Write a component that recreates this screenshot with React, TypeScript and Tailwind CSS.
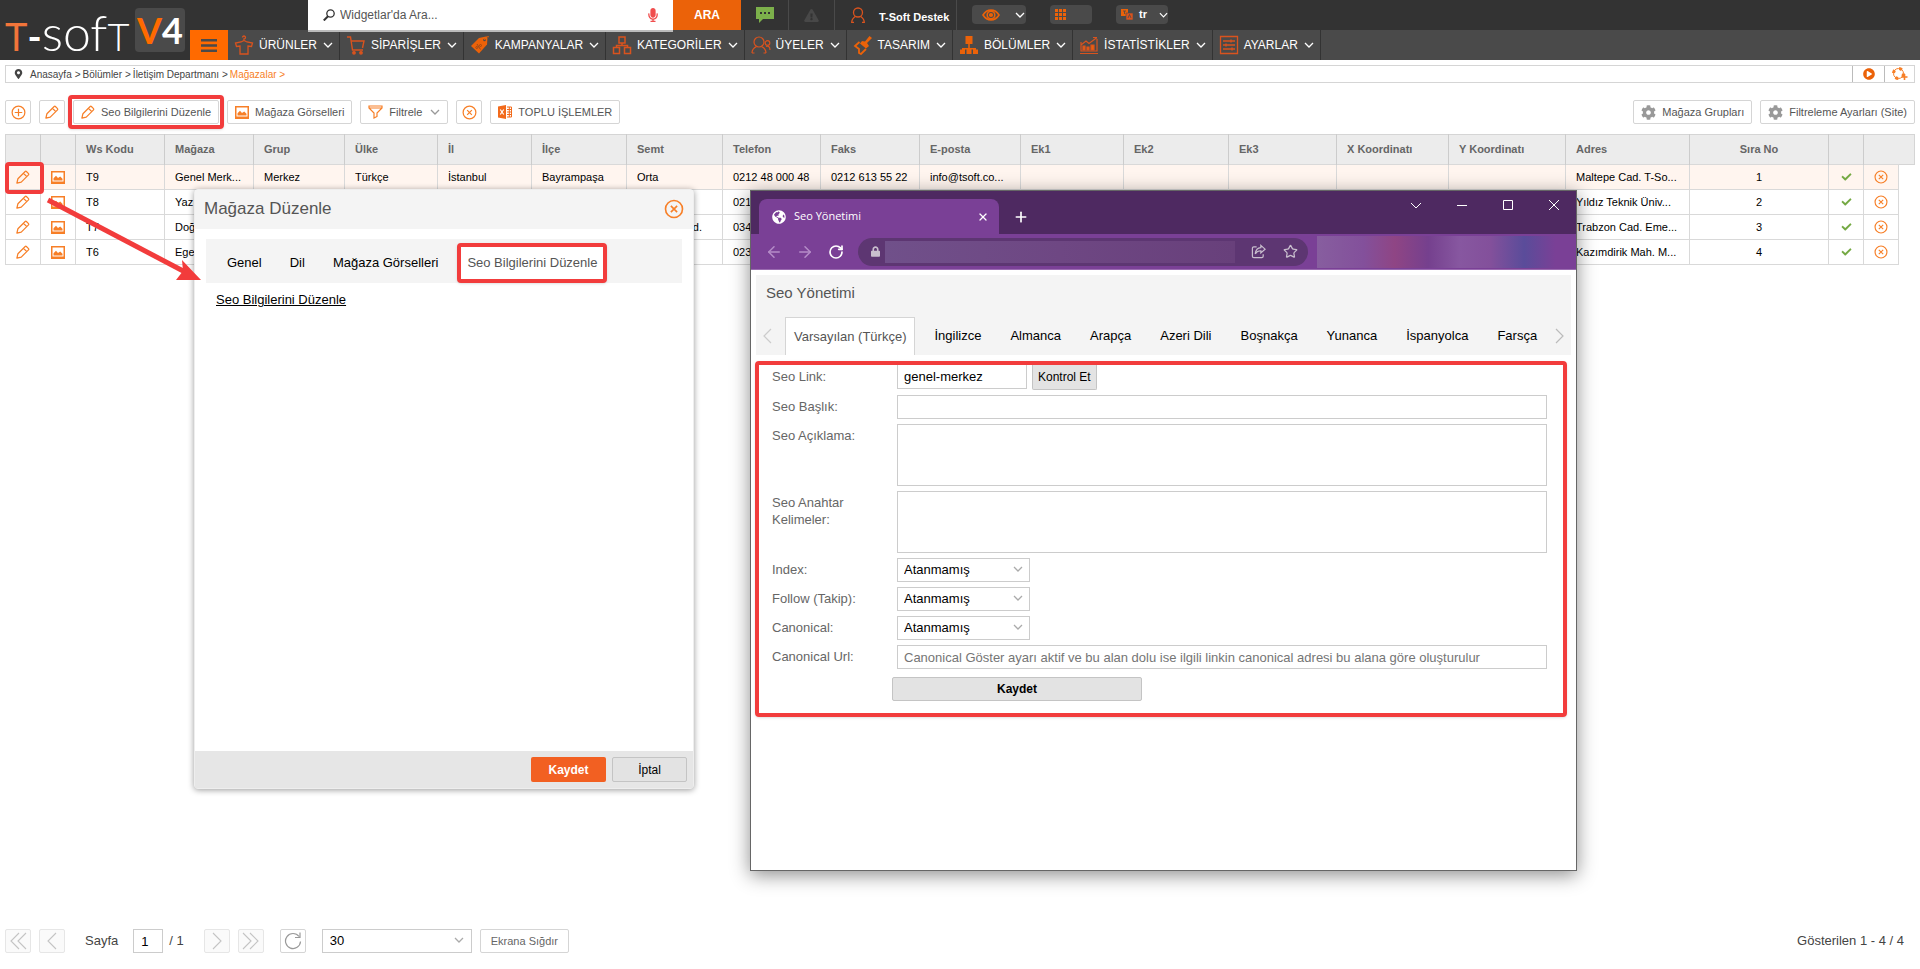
import type { ReactNode } from "react";
import {
  FaMicrophone,
  FaExclamationTriangle,
  FaLock,
  FaGlobeAmericas,
  FaCheck,
  FaPlayCircle,
  FaCog,
  FaMapMarkerAlt,
} from "react-icons/fa";
import { Star, ArrowLeft, ArrowRight, RotateCw, X, Plus } from "lucide-react";

type IconProps = { className?: string };

const Chevron = ({ className = "h-[6px] w-[10px]" }: IconProps) => (
  <svg viewBox="0 0 10 6" className={className} fill="none" stroke="currentColor" strokeWidth="1.3">
    <path d="M1 1l4 4 4-4" />
  </svg>
);

const Pencil = ({ className = "h-[14px] w-[14px]" }: IconProps) => (
  <svg viewBox="0 0 16 16" className={className} fill="none" stroke="#f77f27" strokeWidth="1.4" strokeLinejoin="round">
    <path d="M1 15l1.2-5L10.500 1.700a1 1 0 0 1 1.400 0l2.400 2.400a1 1 0 0 1 0 1.400L6 13.800zM8.500 3.700l3.800 3.800" />
  </svg>
);

const Picture = ({ className = "h-[13px] w-[14px]" }: IconProps) => (
  <svg viewBox="0 0 14 13" className={className}>
    <path fill="#f77f27" d="M0 0h14v13H0z" />
    <path fill="#fff" d="M1.500 1.500h11v9h-11z" />
    <path fill="#f77f27" d="M2.500 9.500V7.200L5 4.800l2 2.200 2.200-1.400 2.300 2.200v1.700z" />
  </svg>
);

const CircleCross = ({ className = "h-[15px] w-[15px]" }: IconProps) => (
  <svg viewBox="0 0 16 16" className={className} fill="none" stroke="#f77f27" strokeWidth="1.3">
    <circle cx="8" cy="8" r="6.8" />
    <path d="M5.500 5.500l5 5m0-5l-5 5" />
  </svg>
);

const CirclePlus = () => (
  <svg viewBox="0 0 16 16" className="h-[15px] w-[15px]" fill="none" stroke="#f77f27" strokeWidth="1.3">
    <circle cx="8" cy="8" r="6.8" />
    <path d="M4 8h8M8 4v8" />
  </svg>
);

const Funnel = () => (
  <svg viewBox="0 0 15 14" className="h-[14px] w-[15px]" fill="none" stroke="#f77f27" strokeWidth="1.2">
    <path d="M1 1h13v2L9 8v3.500L6 13V8L1 3zM1 3h13" />
  </svg>
);

const Excel = () => (
  <svg viewBox="0 0 14 14" className="h-[14px] w-[14px]">
    <path fill="#f26a1b" d="M0 1.500L8 0v14l-8-1.500z" />
    <path d="M9 2h4.500v10H9M9 4.500h4.500M9 7h4.500M9 9.500h4.500M11.300 2v10" fill="none" stroke="#f26a1b" />
    <path d="M2.300 4.500l3.400 5m0-5l-3.400 5" stroke="#fff" strokeWidth="1.200" />
  </svg>
);

const ShareArrow = () => (
  <svg viewBox="0 0 16 16" className="mr-[17px] ml-4 h-[15px] w-[15px]" fill="none" stroke="currentColor" strokeWidth="1.3">
    <path d="M6 3H3a1.500 1.500 0 0 0-1.500 1.500V13A1.500 1.500 0 0 0 3 14.500h8.500A1.500 1.500 0 0 0 13 13v-2" />
    <path d="M10.500 1.500L15 5.500l-4.500 4V7.200C8 7.200 6 8 4.500 10.500 5 6.500 7 4 10.500 3.800z" />
  </svg>
);

const navSvg = "h-[20px] w-[20px] shrink-0";

const ShirtIcon = () => (
  <svg viewBox="0 0 20 20" className={navSvg} fill="none" stroke="#d9531e" strokeWidth="1.3">
    <path d="M10 5.500V4a1.500 1.500 0 1 0-1.500-1.500M10 5.500L7 7 1.500 8l1 3.500L6 11v8h8v-8l3.500.500 1-3.500L13 7z" />
  </svg>
);
const CartIcon = () => (
  <svg viewBox="0 0 20 20" className={navSvg} fill="none" stroke="#d9531e" strokeWidth="1.4">
    <path d="M1 2h3.500l2 13H17M5 6h13l-1.500 7" />
    <circle cx="8" cy="17.800" r="1.200" fill="#d9531e" />
    <circle cx="15" cy="17.800" r="1.200" fill="#d9531e" />
  </svg>
);
const TagIcon = () => (
  <svg viewBox="0 0 20 20" className={navSvg}>
    <path fill="#eb6209" d="M1 11l8-8 7-1.500 1.500 1L17 9.500 9 18.500z" />
    <circle cx="14.500" cy="5" r="1.300" fill="#4a4a4a" />
    <path d="M14.500 5c1-3 3-4 4.500-3" fill="none" stroke="#eb6209" />
    <path d="M7 9l3.500 5.500" stroke="#9c4a1a" />
    <circle cx="6.800" cy="12.500" r="1" fill="none" stroke="#9c4a1a" />
    <circle cx="10.500" cy="10.500" r="1" fill="none" stroke="#9c4a1a" />
  </svg>
);
const TreeIcon = () => (
  <svg viewBox="0 0 20 20" className={navSvg} fill="none" stroke="#d9531e" strokeWidth="1.5">
    <path d="M7 2h6v6H7zM1.500 12.500h6v6h-6zM12.500 12.500h6v6h-6zM10 8v2.500M4.500 12.500v-2h11v2" />
  </svg>
);
const UsersIcon = () => (
  <svg viewBox="0 0 20 20" className={navSvg} fill="none" stroke="#d9531e" strokeWidth="1.2">
    <circle cx="8" cy="7" r="5" />
    <path d="M1 18c0-3 1.500-5 4.500-6.500M15 18c0-3-1.500-5-4.500-6.500M1 18h2.500M12.500 18H15" />
    <circle cx="16.500" cy="8" r="2.300" />
    <path d="M15 11.500c2.500-1 4 .5 4 3.500" />
  </svg>
);
const BrushIcon = () => (
  <svg viewBox="0 0 20 20" className={navSvg}>
    <path fill="#eb6209" d="M9 6l3 .5L16.500 1 19 3l-5 5 2 3-3 2.500-6-5z" />
    <path d="M6.500 7L2 11l4 3v4l2 1 5-5" fill="none" stroke="#eb6209" strokeWidth="1.800" />
  </svg>
);
const SectionsIcon = () => (
  <svg viewBox="0 0 20 20" className={navSvg}>
    <path
      fill="#eb6209"
      d="M6.500 1h7v8h-7zM9.200 9h1.600v6H9.200zM1 14.500h5V19H1zM7.500 14.500h5V19h-5zM14 14.500h5V19h-5zM3 13h14v1.500H3z"
    />
  </svg>
);
const ChartIcon = () => (
  <svg viewBox="0 0 20 20" className={navSvg} fill="none" stroke="#d9531e" strokeWidth="1.200">
    <path d="M2 7v9h16V4M1 18.500h18M2 10l5-4 3 2.500 8-6M14 2.500h4" />
    <path fill="#eb6209" d="M4 11h2v4H4zM8 12h2v3H8zM12 10h3v5h-3z" />
  </svg>
);
const SettingsIcon = () => (
  <svg viewBox="0 0 20 20" className={navSvg} fill="none" stroke="#d9531e" strokeWidth="1.300">
    <path d="M1.500 1.500h17v17h-17zM4 6h12M4 10h12M4 14h12M12 4.500v3M7 8.500v3M13 12.500v3" />
  </svg>
);

const menu = [
  { text: "ÜRÜNLER", icon: <ShirtIcon /> },
  { text: "SİPARİŞLER", icon: <CartIcon /> },
  { text: "KAMPANYALAR", icon: <TagIcon /> },
  { text: "KATEGORİLER", icon: <TreeIcon /> },
  { text: "ÜYELER", icon: <UsersIcon /> },
  { text: "TASARIM", icon: <BrushIcon /> },
  { text: "BÖLÜMLER", icon: <SectionsIcon /> },
  { text: "İSTATİSTİKLER", icon: <ChartIcon /> },
  { text: "AYARLAR", icon: <SettingsIcon /> },
];

const Logo = () => (
  <a href="#" aria-label="T-Soft V4" className="flex w-[190px] shrink-0 items-center justify-between pr-[5px] pl-[5px]">
    <span className="flex h-[60px] items-baseline font-[Lato] leading-[64px] text-white">
      <span className="text-[38px] text-[#f2753a]">T</span>
      <span className="text-[38px] font-bold">-</span>
      <span className="text-[50px] font-light">sof</span>
      <span className="text-[38px] font-light">T</span>
    </span>
    <span className="flex h-[44px] w-[50px] items-center justify-center rounded bg-[#4a4a4a] font-[Lato] text-[36px] leading-[44px] font-bold">
      <span className="text-[#ff6a00]">V</span>
      <span className="text-white">4</span>
    </span>
  </a>
);

const Header = () => (
  <header className="flex h-[60px] bg-[#333]">
    <Logo />
    <div className="flex flex-1 flex-col">
      <div className="flex h-[30px] items-start">
        <div className="relative z-10 ml-[118px] flex h-8 w-[365px] items-center border-b-2 border-[#bbb] bg-white pr-[14px] pl-[15px]">
          <svg viewBox="0 0 12 12" className="h-3 w-3 shrink-0" fill="none" stroke="#333" strokeWidth="1.3">
            <circle cx="7.500" cy="4.500" r="3.700" />
            <path d="M5 7.300L.8 11.500" strokeWidth="2" />
          </svg>
          <input
            aria-label="Widgetlar'da Ara"
            placeholder="Widgetlar'da Ara..."
            className="ml-[5px] min-w-0 flex-1 bg-transparent text-[12px] outline-none placeholder:text-[#555]"
          />
          <button aria-label="Sesli arama">
            <FaMicrophone className="h-[14px] w-[12px] text-[#f04e4e]" />
          </button>
        </div>
        <button className="h-[30px] w-[68px] bg-[#eb6209] text-[12px] font-bold text-white">ARA</button>
        <button aria-label="Mesajlar" className="flex h-[30px] w-[48px] items-center justify-center border-r border-[#4a4a4a]">
          <svg viewBox="0 0 18 16" className="h-4 w-[18px]">
            <path fill="#7cb04b" d="M0 0h18v12H7l-4 4v-4H0z" />
            <path fill="#333" d="M4 5h2v2H4zM8 5h2v2H8zM12 5h2v2h-2z" />
          </svg>
        </button>
        <button aria-label="Uyarılar" className="flex h-[30px] w-[46px] items-center justify-center border-r border-[#4a4a4a]">
          <FaExclamationTriangle className="h-[13px] w-[15px] text-[#484848]" />
        </button>
        <button className="flex h-[30px] w-[122px] items-center border-r border-[#4a4a4a] pl-4 text-[11px] text-white">
          <svg viewBox="0 0 14 16" className="mr-[14px] h-4 w-[14px]" fill="none" stroke="#d9531e" strokeWidth="1.300">
            <circle cx="7" cy="5.500" r="4.500" />
            <path d="M3 15.500H.700c0-3 1.300-4.500 3.500-6M11 15.500h2.300c0-3-1.300-4.500-3.500-6" />
          </svg>
          <span className="mt-1 font-bold">T-Soft Destek</span>
        </button>
        <button aria-label="Görünüm" className="mt-[5px] ml-[15px] flex h-[19px] w-[54px] items-center justify-between rounded bg-[#4a4a4a] pr-px pl-[10px] text-white">
          <svg viewBox="0 0 18 12" className="h-3 w-[18px]" fill="none" stroke="#eb6209" strokeWidth="1.600">
            <path d="M1 6c4-6.500 12-6.500 16 0-4 6.500-12 6.500-16 0z" />
            <circle cx="9" cy="6" r="3.800" />
            <circle cx="9" cy="6" r="1.300" fill="#eb6209" />
          </svg>
          <Chevron />
        </button>
        <button aria-label="Uygulamalar" className="mt-[5px] ml-[24px] flex h-[19px] w-[42px] items-center rounded bg-[#4a4a4a] pl-[5px]">
          <svg viewBox="0 0 11 11" className="h-[11px] w-[11px]" fill="#eb6209">
            <path d="M0 0h3v3H0zM4 0h3v3H4zM8 0h3v3H8zM0 4h3v3H0zM4 4h3v3H4zM8 4h3v3H8zM0 8h3v3H0zM4 8h3v3H4zM8 8h3v3H8z" />
          </svg>
        </button>
        <button className="mt-[5px] ml-[24px] flex h-[19px] w-[52px] items-center rounded bg-[#4a4a4a] pl-[5px] text-[11px] font-bold text-white">
          <svg viewBox="0 0 12 11" className="mr-[6px] h-[11px] w-3">
            <path fill="#eb6209" d="M0 0h7v7H0z" />
            <path fill="#d9531e" stroke="#4a4a4a" strokeWidth=".6" d="M5 4h7v7H5z" />
            <path d="M2 2h3M3.500 2v3M7 9l1.500-3.500L10 9" fill="none" stroke="#4a4a4a" strokeWidth=".8" />
          </svg>
          tr
          <Chevron className="ml-auto h-[6px] w-[9px]" />
        </button>
      </div>
      <nav className="flex h-[30px] bg-[#4a4a4a]">
        <button aria-label="Menü" className="flex w-[38px] items-center justify-center bg-[#ff6a00]">
          <svg viewBox="0 0 16 13" className="h-[13px] w-4" fill="#4a4a4a">
            <path d="M0 0h16v2.500H0zM0 5.200h16v2.500H0zM0 10.400h16v2.500H0z" />
          </svg>
        </button>
        {menu.map(({ text, icon }) => (
          <a
            key={text}
            href="#"
            className="flex items-center border-r border-[#333] pr-[6px] pl-[6px] text-[12px] font-medium text-white"
          >
            {icon}
            <span className="mr-[6px] ml-[5px]">{text}</span>
            <Chevron />
          </a>
        ))}
      </nav>
    </div>
  </header>
);

const Separator = () => <span className="mr-[2px] ml-[3px]">&gt;</span>;

const Breadcrumb = () => (
  <div className="mx-[5px] mt-[5px] flex h-[18px] border border-[#d5d5d5] text-[10px] text-[#444]">
    <div className="flex flex-1 items-center pl-2">
      <FaMapMarkerAlt className="mr-[7px] h-[10px] w-[9px] text-[#444]" />
      <a href="#">Anasayfa</a>
      <Separator />
      <a href="#">Bölümler</a>
      <Separator />
      <a href="#">İletişim Departmanı</a>
      <Separator />
      <a href="#" className="text-[#f77f27]">
        Mağazalar &gt;
      </a>
    </div>
    <button aria-label="Video" className="flex w-8 items-center justify-center border-l border-[#bbb]">
      <FaPlayCircle className="h-3 w-3 text-[#eb6209]" />
    </button>
    <button aria-label="Yardım" className="flex w-[30px] items-center justify-center border-l border-[#bbb]">
      <svg viewBox="0 0 16 14" className="h-[14px] w-4" fill="none" stroke="#f77f27">
        <circle cx="6.500" cy="6.500" r="5" />
        <circle cx="6.500" cy="6.500" r="5" strokeWidth="3" strokeDasharray="3 4.850" />
        <path d="M12.500 7v6M9.500 10h6" strokeWidth="1.600" />
      </svg>
    </button>
  </div>
);

type ToolButtonProps = { icon: ReactNode; text?: string; label?: string; marked?: boolean; children?: ReactNode };

const ToolButton = ({ icon, text, label, marked, children }: ToolButtonProps) => (
  <button
    aria-label={label}
    className={`relative flex h-6 items-center rounded-[2px] border border-[#d5d5d5] bg-white text-[11px] text-[#555] ${
      text ? "px-[7px]" : "w-[26px] justify-center"
    }`}
  >
    {icon}
    {text && <span className="ml-[6px]">{text}</span>}
    {children}
    {marked && <span className="absolute -inset-x-[6px] -inset-y-[6px] rounded border-4 border-[#f23c3c] shadow-sm" />}
  </button>
);

const Toolbar = () => (
  <div className="mx-[5px] mt-[17px] flex items-center gap-2">
    <ToolButton icon={<CirclePlus />} label="Ekle" />
    <ToolButton icon={<Pencil />} label="Düzenle" />
    <ToolButton icon={<Pencil />} text="Seo Bilgilerini Düzenle" marked />
    <ToolButton icon={<Picture />} text="Mağaza Görselleri" />
    <ToolButton icon={<Funnel />} text="Filtrele">
      <Chevron className="ml-2 h-[6px] w-[10px] text-[#999]" />
    </ToolButton>
    <ToolButton icon={<CircleCross />} label="Filtreyi temizle" />
    <ToolButton icon={<Excel />} text="TOPLU İŞLEMLER" />
    <div className="ml-auto flex gap-2">
      <ToolButton icon={<FaCog className="h-[15px] w-[15px] text-[#999]" />} text="Mağaza Grupları" />
      <ToolButton icon={<FaCog className="h-[15px] w-[15px] text-[#999]" />} text="Filtreleme Ayarları (Site)" />
    </div>
  </div>
);

const columns = [
  { title: "", width: "w-[35px]" },
  { title: "", width: "w-[35px]" },
  { title: "Ws Kodu", width: "w-[89px]" },
  { title: "Mağaza", width: "w-[89px]" },
  { title: "Grup", width: "w-[91px]" },
  { title: "Ülke", width: "w-[93px]" },
  { title: "İl", width: "w-[94px]" },
  { title: "İlçe", width: "w-[95px]" },
  { title: "Semt", width: "w-[96px]" },
  { title: "Telefon", width: "w-[98px]" },
  { title: "Faks", width: "w-[99px]" },
  { title: "E-posta", width: "w-[101px]" },
  { title: "Ek1", width: "w-[103px]" },
  { title: "Ek2", width: "w-[105px]" },
  { title: "Ek3", width: "w-[108px]" },
  { title: "X Koordinatı", width: "w-[112px]" },
  { title: "Y Koordinatı", width: "w-[117px]" },
  { title: "Adres", width: "w-[124px]" },
  { title: "Sıra No", width: "w-[139px]" },
  { title: "", width: "w-[35px]" },
  { title: "", width: "w-[35px]" },
];

const stores = [
  [
    "T9",
    "Genel Merk...",
    "Merkez",
    "Türkçe",
    "İstanbul",
    "Bayrampaşa",
    "Orta",
    "0212 48 000 48",
    "0212 613 55 22",
    "info@tsoft.co...",
    "",
    "",
    "",
    "",
    "",
    "Maltepe Cad. T-So...",
  ],
  ["T8", "Yaz", "", "", "", "", "", "021", "", "", "", "", "", "", "", "Yıldız Teknik Üniv..."],
  ["T7", "Doğ", "", "", "", "", "d.", "034", "", "", "", "", "", "", "", "Trabzon Cad. Eme..."],
  ["T6", "Ege", "", "", "", "", "", "023", "", "", "", "", "", "", "", "Kazımdirik Mah. M..."],
];

const StoreTable = () => (
  <table className="mx-[5px] mt-[10px] w-[calc(100%-10px)] table-fixed border-collapse text-[11px] text-black">
    <thead>
      <tr className="h-[30px] border border-[#d5d5d5] bg-[#ececec] text-[#666]">
        {columns.map(({ title, width }, i) => (
          <th
            key={i}
            className={`${width} px-[10px] font-bold ${i === 18 ? "text-center" : "text-left"} ${
              i < 20 ? "border-r border-[#ccc]" : ""
            }`}
          >
            {title}
          </th>
        ))}
        <th className="w-[16px]" />
      </tr>
    </thead>
    <tbody>
      {stores.map((store, row) => (
        <tr key={store[0]} className={`h-[25px] ${row === 0 ? "bg-[#fff5ef]" : ""}`}>
          <td className="relative border border-[#d9d9d9]">
            <button aria-label={`${store[0]} düzenle`} className="flex w-full justify-center">
              <Pencil />
            </button>
            {row === 0 && (
              <span className="absolute -top-[3px] -right-[4px] -bottom-[5px] -left-px z-10 rounded border-4 border-[#f23c3c]" />
            )}
          </td>
          <td className="border border-[#d9d9d9]">
            <button aria-label={`${store[0]} görselleri`} className="flex w-full justify-center">
              <Picture />
            </button>
          </td>
          {store.map((value, i) => (
            <td
              key={i}
              className={`overflow-hidden border border-[#d9d9d9] px-[10px] whitespace-nowrap ${
                value === "d." ? "pr-5 text-right" : ""
              }`}
            >
              {value}
            </td>
          ))}
          <td className="border border-[#d9d9d9] text-center">{row + 1}</td>
          <td className="border border-[#d9d9d9]">
            <FaCheck className="mx-auto h-[10px] w-[11px] text-[#74a943]" />
          </td>
          <td className="border border-[#d9d9d9]">
            <button aria-label={`${store[0]} sil`} className="flex w-full justify-center">
              <CircleCross className="h-[14px] w-[14px]" />
            </button>
          </td>
          <td className="bg-white" />
        </tr>
      ))}
    </tbody>
  </table>
);

const StoreDialog = () => (
  <section className="absolute top-[189px] left-[194px] z-20 flex h-[600px] w-[500px] flex-col rounded border border-[#eee] bg-white shadow-[0_1px_6px_rgba(0,0,0,0.4)]">
    <div className="flex h-[39px] shrink-0 items-center justify-between bg-[#f4f4f4] px-[9px] pb-[2px]">
      <h2 className="text-[17px] text-[#555]">Mağaza Düzenle</h2>
      <button aria-label="Kapat">
        <CircleCross className="h-5 w-5" />
      </button>
    </div>
    <div className="mx-[11px] mt-[10px] flex h-[44px] items-center bg-[#f4f4f4] pt-1 pl-[7px] text-[13px]">
      <button className="px-[14px]">Genel</button>
      <button className="px-[14px]">Dil</button>
      <button className="px-[14px]">Mağaza Görselleri</button>
      <button className="ml-[5px] h-[40px] rounded border-4 border-[#f23c3c] bg-white px-[6px] text-[#555] shadow-sm">
        Seo Bilgilerini Düzenle
      </button>
    </div>
    <a href="#" className="mt-[7px] ml-[21px] self-start text-[13px] underline">
      Seo Bilgilerini Düzenle
    </a>
    <div className="mt-auto flex h-[37px] items-center justify-end gap-[6px] bg-[#e6e6e6] pr-[6px] text-[12px]">
      <button className="h-[25px] w-[75px] rounded-[2px] bg-[#f26022] font-bold text-white">Kaydet</button>
      <button className="h-[25px] w-[75px] rounded-[2px] border border-[#c4c4c4] bg-[#e3e3e3]">İptal</button>
    </div>
  </section>
);

const languages = ["İngilizce", "Almanca", "Arapça", "Azeri Dili", "Boşnakça", "Yunanca", "İspanyolca", "Farsça"];

const BrowserChrome = () => (
  <>
    <div className="flex h-[43px] shrink-0 bg-[#4e2961] pl-2 text-white">
      <div className="mt-2 flex w-[240px] items-center rounded-t-lg bg-[#7a4096] pr-[10px] pl-[13px] font-['Open_Sans'] text-[11px]">
        <FaGlobeAmericas className="mr-2 h-[14px] w-[14px]" />
        Seo Yönetimi
        <button aria-label="Sekmeyi kapat" className="ml-auto">
          <X className="h-3 w-3" strokeWidth={2.5} />
        </button>
      </div>
      <button aria-label="Yeni sekme" className="mt-2 ml-[14px]">
        <Plus className="h-4 w-4" strokeWidth={2.5} />
      </button>
      <svg viewBox="0 0 150 14" className="mt-[7px] mr-4 ml-auto h-[14px] w-[150px]" fill="none" stroke="#fff">
        <path d="M1 5l5 5 5-5M47 7.500h10M93.500 2.500h9v9h-9zM139 2l10 10M149 2l-10 10" />
      </svg>
    </div>
    <div className="flex h-9 shrink-0 items-center border-b border-[#9a6bb0] bg-[#7a4096] pl-[14px] text-white">
      <ArrowLeft className="h-[18px] w-[18px] text-[#b58cc8]" />
      <ArrowRight className="ml-[13px] h-[18px] w-[18px] text-[#b58cc8]" />
      <RotateCw className="mr-[14px] ml-[14px] h-4 w-4" strokeWidth={2.5} />
      <div className="flex h-7 flex-1 items-center rounded-full bg-[#5d3672] pr-[10px] pl-[13px] text-[#c9bfce]">
        <FaLock className="mr-[5px] h-[11px] w-[9px]" />
        <div className="h-[22px] flex-1 bg-linear-to-r from-[#70508a] via-[#6e4783] to-[#68407b]" />
        <ShareArrow />
        <Star className="h-[15px] w-[15px]" />
      </div>
      <div className="ml-[9px] h-8 w-[259px] bg-[linear-gradient(90deg,#875e9f_0%,#83509b_18%,#8f4584_30%,#75408e_43%,#8757a0_55%,#83509b_67%,#5a4c9a_80%,#7a4096_92%)]" />
    </div>
  </>
);

type RowProps = { id: string; label: string; children: ReactNode };

const FormRow = ({ id, label, children }: RowProps) => (
  <div className="flex items-start">
    <label htmlFor={id} className="w-[125px] shrink-0 pt-[3px] pr-8 leading-[17px] text-[#666]">
      {label}
    </label>
    {children}
  </div>
);

const SeoSelect = ({ id, label }: { id: string; label: string }) => (
  <FormRow id={id} label={label}>
    <div className="relative">
      <select id={id} className="h-6 w-[133px] appearance-none border border-[#ccc] bg-white px-[6px]">
        <option>Atanmamış</option>
      </select>
      <Chevron className="pointer-events-none absolute top-2 right-[7px] h-[6px] w-[10px] text-[#aaa]" />
    </div>
  </FormRow>
);

const SeoForm = () => (
  <form className="mr-[9px] ml-1 mt-[6px] flex flex-col gap-[5px] rounded border-4 border-[#f23c3c] pr-4 pb-3 pl-[13px] text-[13px] shadow-sm">
    <FormRow id="seo-link" label="Seo Link:">
      <input id="seo-link" defaultValue="genel-merkez" className="h-6 w-[130px] border border-t-0 border-[#ccc] px-[6px]" />
      <button type="button" className="ml-[5px] h-[25px] rounded-b-[2px] border border-t-0 border-[#c4c4c4] bg-[#e3e3e3] px-[5px] text-[12px]">
        Kontrol Et
      </button>
    </FormRow>
    <FormRow id="seo-title" label="Seo Başlık:">
      <input id="seo-title" className="h-6 min-w-0 flex-1 border border-[#ccc] px-[6px]" />
    </FormRow>
    <FormRow id="seo-desc" label="Seo Açıklama:">
      <textarea id="seo-desc" className="h-[62px] min-w-0 flex-1 resize-none border border-[#ccc] px-[6px]" />
    </FormRow>
    <FormRow id="seo-keywords" label="Seo Anahtar Kelimeler:">
      <textarea id="seo-keywords" className="h-[62px] min-w-0 flex-1 resize-none border border-[#ccc] px-[6px]" />
    </FormRow>
    <SeoSelect id="seo-index" label="Index:" />
    <SeoSelect id="seo-follow" label="Follow (Takip):" />
    <SeoSelect id="seo-canonical" label="Canonical:" />
    <FormRow id="seo-url" label="Canonical Url:">
      <input
        id="seo-url"
        placeholder="Canonical Göster ayarı aktif ve bu alan dolu ise ilgili linkin canonical adresi bu alana göre oluşturulur"
        className="h-6 min-w-0 flex-1 border border-[#ccc] px-[6px] placeholder:text-[#757575]"
      />
    </FormRow>
    <button type="button" className="mt-[3px] ml-[120px] h-6 w-[250px] rounded-[2px] border border-[#c4c4c4] bg-[#e3e3e3] text-[12px] font-bold">
      Kaydet
    </button>
  </form>
);

const SeoWindow = () => (
  <section className="absolute top-[190px] left-[750px] z-20 flex h-[681px] w-[827px] flex-col border border-[#666] bg-white shadow-[0_4px_18px_rgba(0,0,0,0.45)]">
    <BrowserChrome />
    <div className="mx-[5px] mt-[5px] flex h-[80px] shrink-0 flex-col bg-[#f4f4f4]">
      <h2 className="mt-[7px] ml-[10px] text-[15px] text-[#555]">Seo Yönetimi</h2>
      <div className="mt-auto flex h-[38px] items-center gap-px px-[7px] text-[13px]">
        <button aria-label="Önceki diller">
          <svg viewBox="0 0 9 16" className="h-4 w-[9px]" fill="none" stroke="#ccc" strokeWidth="1.200">
            <path d="M8 1L1 8l7 7" />
          </svg>
        </button>
        <button className="mr-1 ml-3 h-[38px] border border-b-0 border-[#d5d5d5] bg-white px-2 text-[#555]">
          Varsayılan (Türkçe)
        </button>
        {languages.map((language) => (
          <button key={language} className="px-[14px]">
            {language}
          </button>
        ))}
        <button aria-label="Sonraki diller" className="ml-auto">
          <svg viewBox="0 0 9 16" className="h-4 w-[9px]" fill="none" stroke="#bbb" strokeWidth="1.200">
            <path d="M1 1l7 7-7 7" />
          </svg>
        </button>
      </div>
    </div>
    <SeoForm />
  </section>
);

const PageButton = ({ label, d }: { label: string; d: string }) => (
  <button aria-label={label} className="flex h-6 w-[26px] items-center justify-center rounded-[2px] border border-[#e6e6e6] bg-[#fafafa]">
    <svg viewBox="0 0 18 18" className="h-[18px] w-[18px]" fill="none" stroke="#c4c4c4" strokeWidth="1.100">
      <path d={d} />
    </svg>
  </button>
);

const Pager = () => (
  <footer className="mt-auto mr-4 mb-4 ml-[5px] flex items-center text-[13px] text-[#444]">
    <div className="flex gap-2">
      <PageButton label="İlk sayfa" d="M10 1L2 9l8 8M17 1L9 9l8 8" />
      <PageButton label="Önceki sayfa" d="M13 1L5 9l8 8" />
    </div>
    <label htmlFor="page" className="mr-[15px] ml-5">
      Sayfa
    </label>
    <input id="page" defaultValue="1" className="h-6 w-[30px] border border-[#ccc] px-[7px] text-black" />
    <span className="ml-[6px]">/ 1</span>
    <div className="ml-5 flex gap-2">
      <PageButton label="Sonraki sayfa" d="M5 1l8 8-8 8" />
      <PageButton label="Son sayfa" d="M1 1l8 8-8 8M8 1l8 8-8 8" />
    </div>
    <button aria-label="Yenile" className="ml-4 flex h-6 w-[26px] items-center justify-center rounded-[2px] border border-[#d5d5d5]">
      <svg viewBox="0 0 18 18" className="h-[18px] w-[18px]" fill="none" stroke="#999" strokeWidth="1.200">
        <path d="M16.500 9.500A7.500 7.500 0 1 1 15 4.500M16 .5v5h-5" />
      </svg>
    </button>
    <div className="relative ml-4">
      <select aria-label="Sayfa başına kayıt" className="h-6 w-[150px] appearance-none border border-[#ccc] bg-white px-[7px] text-black">
        <option>30</option>
      </select>
      <Chevron className="pointer-events-none absolute top-2 right-2 h-[6px] w-[10px] text-[#aaa]" />
    </div>
    <button className="ml-2 h-6 rounded-[2px] border border-[#d5d5d5] px-[10px] text-[11px] text-[#666]">Ekrana Sığdır</button>
    <span className="ml-auto">Gösterilen 1 - 4 / 4</span>
  </footer>
);

// Callout from the row's edit button to the dialog
const Arrow = () => (
  <svg viewBox="0 0 156 86" className="pointer-events-none absolute top-[195px] left-[46px] z-30 h-[86px] w-[156px]">
    <path d="M2 5l139 73" stroke="#f23c3c" strokeWidth="5" />
    <path fill="#f23c3c" d="M155 85l-25 0 7-9-1-11z" />
  </svg>
);

export default function App() {
  return (
    <div className="relative flex min-h-screen flex-col bg-white font-['Liberation_Sans',Arial,sans-serif]">
      <Header />
      <Breadcrumb />
      <Toolbar />
      <StoreTable />
      <StoreDialog />
      <SeoWindow />
      <Arrow />
      <Pager />
    </div>
  );
}
